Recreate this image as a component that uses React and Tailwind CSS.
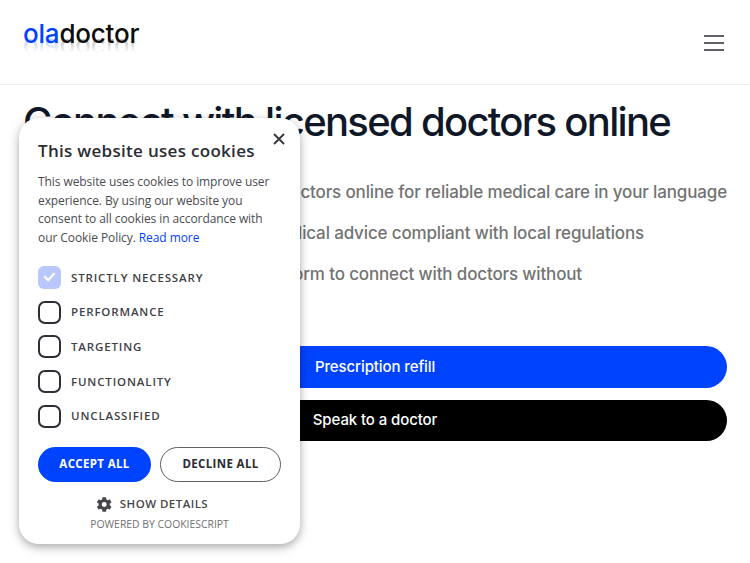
import React from "react";

function Check({ label, checked }) {
  return (
    <div className="flex items-center gap-[10px] h-[23px]">
      {checked ? (
        <span className="w-[23px] h-[23px] rounded-[6px] bg-[#b9c7fd] flex items-center justify-center shrink-0">
          <svg width="13" height="10" viewBox="0 0 14 11" fill="none">
            <path d="M2 5.5L5.5 9L12 2" stroke="#ffffff" strokeWidth="2.6" strokeLinecap="round" strokeLinejoin="round" />
          </svg>
        </span>
      ) : (
        <span className="w-[23px] h-[23px] rounded-[7px] border-2 border-[#2d2f36] bg-white shrink-0" />
      )}
      <span className="text-[11.5px] font-semibold tracking-[0.85px] text-[#3f4147] leading-none">{label}</span>
    </div>
  );
}

export default function App() {
  return (
    <div className="relative w-[750px] h-[563px] overflow-hidden bg-white font-['Inter',sans-serif]">
      <header className="h-[85px] border-b border-[#efefef] pl-[23px] pr-[26px] flex items-center justify-between">
        <div className="relative -mt-[16px] h-[30px]">
          <div className="text-[26px] font-medium leading-[30px] tracking-[-0.2px] text-[#0c0c0c]">
            <span className="text-[#0043ff]">ola</span>doctor
          </div>
          <div
            aria-hidden="true"
            className="absolute left-0 top-[14px] h-[30px] text-[26px] font-medium leading-[30px] tracking-[-0.2px] text-[#0c0c0c] -scale-y-100 opacity-30 [mask-image:linear-gradient(to_top,black_15%,transparent_65%)]"
          >
            <span className="text-[#0043ff]">ola</span>doctor
          </div>
        </div>
        <svg width="20" height="16" viewBox="0 0 20 16" className="mt-[1px]">
          <path d="M0 1H20M0 8H20M0 15H20" stroke="#2b2f36" strokeWidth="1.6" />
        </svg>
      </header>

      <main className="px-[23px]">
        <h1 className="mt-[12px] text-[40px] leading-[50px] font-medium tracking-[-1.7px] text-[#101828] whitespace-nowrap">
          Connect with licensed doctors online
        </h1>
        <div className="mt-[34px] flex flex-col gap-[19px] text-[17px] leading-[22px] font-medium tracking-[-0.15px] text-[#737373] text-right whitespace-nowrap">
          <p>Consult licensed doctors online for reliable medical care in your language</p>
          <p className="pr-[83px]">Receive medical advice compliant with local regulations</p>
          <p className="pr-[145px]">Use our platform to connect with doctors without</p>
        </div>
        <div className="mt-[61px] flex flex-col gap-[12px]">
          <button className="h-[42px] rounded-full bg-[#0043ff] text-white text-[15px] font-medium tracking-[-0.1px]">Prescription refill</button>
          <button className="h-[41px] rounded-full bg-black text-white text-[15px] font-medium tracking-[-0.1px]">Speak to a doctor</button>
        </div>
      </main>

      <aside className="absolute left-[19px] top-[118px] w-[281px] h-[426px] rounded-[20px] bg-white shadow-[0_3px_10px_rgba(0,0,0,0.35)] pl-[19px] pr-[19px] pt-[21px] font-['Open_Sans',sans-serif]">
        <button className="absolute right-[14px] top-[14px] w-[14px] h-[14px] flex items-center justify-center" aria-label="Close">
          <svg width="12" height="12" viewBox="0 0 12 12">
            <path d="M1 1L11 11M11 1L1 11" stroke="#3a3c42" strokeWidth="2" />
          </svg>
        </button>
        <h2 className="text-[17px] leading-[23px] font-semibold tracking-[0.3px] text-[#2b2d33] whitespace-nowrap">This website uses cookies</h2>
        <p className="mt-[11px] text-[12px] leading-[18.7px] text-[#4a4c52] tracking-[-0.08px] whitespace-nowrap">
          This website uses cookies to improve user<br />
          experience. By using our website you<br />
          consent to all cookies in accordance with<br />
          our Cookie Policy. <span className="text-[#0043ff]">Read more</span>
        </p>
        <div className="mt-[18px] flex flex-col gap-[11.7px]">
          <Check label="STRICTLY NECESSARY" checked />
          <Check label="PERFORMANCE" />
          <Check label="TARGETING" />
          <Check label="FUNCTIONALITY" />
          <Check label="UNCLASSIFIED" />
        </div>
        <div className="mt-[19px] flex gap-[9px]">
          <button className="w-[114px] h-[35px] rounded-full bg-[#0043ff] text-white text-[11.5px] font-bold tracking-[0.35px]">ACCEPT ALL</button>
          <button className="w-[122px] h-[35px] rounded-full border border-[#5f6166] bg-white text-[#2b2d33] text-[11.5px] font-bold tracking-[0.35px]">DECLINE ALL</button>
        </div>
        <div className="mt-[14px] flex items-center justify-center gap-[7px] pr-[15px]">
          <svg width="17" height="17" viewBox="0 0 24 24" fill="#45474d">
            <path fillRule="evenodd" d="M19.4 13c.04-.33.06-.66.06-1s-.02-.67-.07-1l2.2-1.7c.2-.15.25-.43.12-.66l-2.1-3.6c-.12-.22-.4-.3-.62-.22l-2.6 1.04c-.54-.4-1.12-.75-1.76-1L14.2 2.1A.5.5 0 0 0 13.7 1.7H9.5a.5.5 0 0 0-.5.42L8.6 4.87c-.64.26-1.22.6-1.76 1L4.24 4.82c-.23-.09-.5 0-.62.22l-2.1 3.6c-.13.23-.07.5.12.66L3.84 11c-.05.33-.08.67-.08 1s.03.67.07 1l-2.2 1.7c-.2.15-.25.43-.12.66l2.1 3.6c.12.22.4.3.62.22l2.6-1.04c.54.4 1.12.75 1.76 1l.4 2.75c.04.25.25.42.5.42h4.2c.25 0 .46-.17.5-.42l.4-2.75c.64-.26 1.22-.6 1.76-1l2.6 1.04c.23.09.5 0 .62-.22l2.1-3.6c.13-.23.07-.5-.12-.66L19.4 13zM11.6 15.5a3.5 3.5 0 1 1 0-7 3.5 3.5 0 0 1 0 7z" />
          </svg>
          <span className="text-[11.5px] font-semibold tracking-[0.45px] text-[#45474d] leading-[16px]">SHOW DETAILS</span>
        </div>
        <div className="mt-[4px] text-center text-[10.4px] leading-[14px] text-[#6f7175]">POWERED BY COOKIESCRIPT</div>
      </aside>
    </div>
  );
}
